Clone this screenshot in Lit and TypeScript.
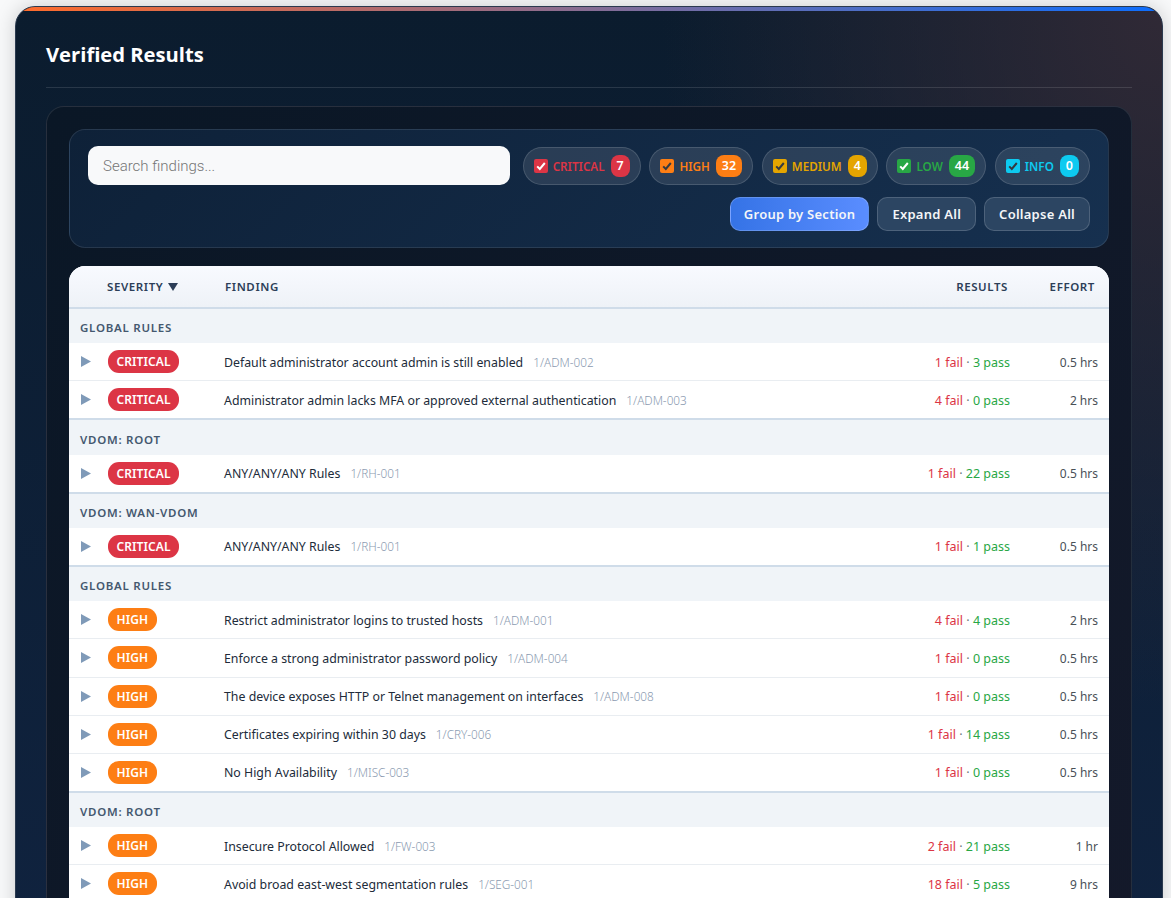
import { LitElement, html, css } from "lit";
import { customElement } from "lit/decorators.js";

type Row = { sev: string; title: string; id: string; fail: number; pass: number; effort: string };
type Group = { name: string; rows: Row[] };

const crit = "CRITICAL";
const high = "HIGH";

const groups: Group[] = [
  {
    name: "GLOBAL RULES",
    rows: [
      { sev: crit, title: "Default administrator account admin is still enabled", id: "1/ADM-002", fail: 1, pass: 3, effort: "0.5 hrs" },
      { sev: crit, title: "Administrator admin lacks MFA or approved external authentication", id: "1/ADM-003", fail: 4, pass: 0, effort: "2 hrs" },
    ],
  },
  { name: "VDOM: ROOT", rows: [{ sev: crit, title: "ANY/ANY/ANY Rules", id: "1/RH-001", fail: 1, pass: 22, effort: "0.5 hrs" }] },
  { name: "VDOM: WAN-VDOM", rows: [{ sev: crit, title: "ANY/ANY/ANY Rules", id: "1/RH-001", fail: 1, pass: 1, effort: "0.5 hrs" }] },
  {
    name: "GLOBAL RULES",
    rows: [
      { sev: high, title: "Restrict administrator logins to trusted hosts", id: "1/ADM-001", fail: 4, pass: 4, effort: "2 hrs" },
      { sev: high, title: "Enforce a strong administrator password policy", id: "1/ADM-004", fail: 1, pass: 0, effort: "0.5 hrs" },
      { sev: high, title: "The device exposes HTTP or Telnet management on interfaces", id: "1/ADM-008", fail: 1, pass: 0, effort: "0.5 hrs" },
      { sev: high, title: "Certificates expiring within 30 days", id: "1/CRY-006", fail: 1, pass: 14, effort: "0.5 hrs" },
      { sev: high, title: "No High Availability", id: "1/MISC-003", fail: 1, pass: 0, effort: "0.5 hrs" },
    ],
  },
  {
    name: "VDOM: ROOT",
    rows: [
      { sev: high, title: "Insecure Protocol Allowed", id: "1/FW-003", fail: 2, pass: 21, effort: "1 hr" },
      { sev: high, title: "Avoid broad east-west segmentation rules", id: "1/SEG-001", fail: 18, pass: 5, effort: "9 hrs" },
    ],
  },
];

const filters = [
  { label: "CRITICAL", count: 7, cls: "critical" },
  { label: "HIGH", count: 32, cls: "high" },
  { label: "MEDIUM", count: 4, cls: "medium" },
  { label: "LOW", count: 44, cls: "low" },
  { label: "INFO", count: 0, cls: "info" },
];

@customElement("app-root")
export class AppRoot extends LitElement {
  static styles = css`
    :host {
      display: block;
      height: 898px;
      overflow: hidden;
      background: #f8f9fa;
      font-family: "Noto Sans", "Open Sans", sans-serif;
      box-sizing: border-box;
      padding: 6px 8px 0 15px;
    }
    * { box-sizing: border-box; }
    .card {
      position: relative;
      border: 1px solid #2b3a4f;
      border-radius: 20px;
      background:
        radial-gradient(500px 700px at 100% 0%, rgba(50, 42, 54, 0.95), rgba(50, 42, 54, 0) 100%),
        linear-gradient(180deg, #0b1c2e, #102340);
      padding: 30px 30px 0;
      height: 1000px;
      box-shadow: 0 0 20px rgba(0, 0, 0, 0.18);
      overflow: hidden;
    }
    .accent {
      position: absolute;
      top: 0; left: 0; right: 0;
      height: 4px;
      background: linear-gradient(90deg, #ff6b2b, #0d6efd);
    }
    h2 {
      margin: 0;
      color: #fff;
      font-family: "Open Sans", "Noto Sans", sans-serif;
      font-size: 20.2px;
      font-weight: 700;
      line-height: 34px;
      height: 51px;
      border-bottom: 1px solid rgba(255, 255, 255, 0.12);
    }
    .panel {
      margin-top: 18px;
      border: 1px solid rgba(255, 255, 255, 0.1);
      border-radius: 18px;
      padding: 22px;
      background: linear-gradient(135deg, #0a1726, #14192a);
      height: 900px;
    }
    .toolbar {
      border: 1px solid rgba(255, 255, 255, 0.1);
      border-radius: 16px;
      background: linear-gradient(135deg, #0e2138, #16304f);
      padding: 16px 18px;
      height: 119px;
    }
    .top { display: flex; align-items: center; gap: 8px; justify-content: space-between; }
    .search {
      flex: 0 0 422px;
      height: 39px;
      border-radius: 10px;
      background: #f8f9fa;
      color: #757575;
      font-family: Roboto, sans-serif;
      font-size: 15px;
      font-weight: 300;
      padding: 0 15px;
      display: flex;
      align-items: center;
      margin-right: 4px;
    }
    .chip {
      height: 38px;
      display: flex;
      align-items: center;
      gap: 5px;
      padding: 0 10px;
      border-radius: 19px;
      background: rgba(255, 255, 255, 0.1);
      border: 1px solid rgba(255, 255, 255, 0.14);
      font-size: 11.7px;
      font-weight: 600;
    }
    .box {
      width: 14px; height: 14px; border-radius: 2px;
      display: flex; align-items: center; justify-content: center;
    }
    .count {
      height: 22px;
      min-width: 19px;
      padding: 0 6px;
      border-radius: 8px;
      font-size: 12.5px;
      font-weight: 600;
      color: #fff;
      display: flex;
      align-items: center;
      justify-content: center;
      margin-left: 1px;
    }
    .critical { color: #dc3545; }
    .high { color: #fd7e14; }
    .medium { color: #e5a500; }
    .low { color: #28a745; }
    .info { color: #0dcaf0; }
    .critical .box, .critical .count { background: #dc3545; }
    .high .box, .high .count { background: #fd7e14; }
    .medium .box, .medium .count { background: #e5a500; }
    .low .box, .low .count { background: #28a745; }
    .info .box, .info .count { background: #0dcaf0; }
    .actions { display: flex; justify-content: flex-end; gap: 8px; margin-top: 12px; }
    button {
      height: 34px;
      border-radius: 10px;
      border: 1px solid rgba(255, 255, 255, 0.16);
      background: #2c4562;
      color: #f4f6f8;
      font-family: inherit;
      font-size: 13px;
      font-weight: 600;
      letter-spacing: 0.25px;
      padding: 0 14px;
    }
    button.primary {
      background: linear-gradient(90deg, #3573e6, #5a8dff);
      border-color: rgba(255, 255, 255, 0.2);
      padding: 0 13px;
    }
    .tablewrap {
      margin-top: 18px;
      border-radius: 16px 16px 0 0;
      overflow: hidden;
      background: #fff;
    }
    .rowgrid {
      display: grid;
      grid-template-columns: 39px 116px 1fr 120px 88px;
      align-items: center;
    }
    .head {
      height: 43px;
      background: linear-gradient(180deg, #f8faff, #eef2f7);
      border-bottom: 2px solid #cfdce9;
      color: #2c3e58;
      font-size: 11.5px;
      font-weight: 600;
      letter-spacing: 0.6px;
    }
    .head .r1 { text-align: right; padding-right: 13px; }
    .head .r2 { text-align: right; padding-right: 14px; }
    .head .sev { display: flex; align-items: center; gap: 5px; margin-left: -1px; }
    .head .find { margin-left: 1px; }
    .section {
      height: 34.1px;
      background: #f0f4f8;
      color: #44586f;
      font-size: 11.5px;
      font-weight: 600;
      letter-spacing: 0.75px;
      padding: 3px 0 0 11px;
      display: flex;
      align-items: center;
    }
    .row {
      height: 38.2px;
      border-bottom: 1px solid #e9edf1;
      color: #212b3a;
      font-size: 12.33px;
    }
    .row.last { height: 39.2px; border-bottom: 2px solid #cfdce9; }
    .tri { padding-left: 12px; display: flex; }
    .badge {
      display: inline-flex;
      align-items: center;
      height: 23px;
      padding: 0 8.5px;
      border-radius: 11px;
      color: #fff;
      font-size: 12px;
      font-weight: 600;
      letter-spacing: 0.1px;
    }
    .badge.CRITICAL { background: #dc3545; }
    .badge.HIGH { background: #fd7e14; }
    .title, .res, .eff { padding-top: 1px; }
    .fid { color: #8a9ab0; font-size: 11.75px; margin-left: 10px; font-weight: 300; }
    .res { text-align: right; padding-right: 11px; font-size: 12.5px; }
    .fail { color: #dc3545; }
    .pass { color: #28a745; }
    .sep { color: #6c757d; }
    .eff { text-align: right; padding-right: 11px; color: #495057; font-size: 12px; }
  `;

  private check(dark: boolean) {
    return html`<svg width="10" height="10" viewBox="0 0 10 10"><path d="M1.2 5.4 L3.8 8 L8.8 2" fill="none" stroke=${dark ? "#343a40" : "#fff"} stroke-width="2"></path></svg>`;
  }

  private renderRow(r: Row, last: boolean) {
    return html`<div class="rowgrid row ${last ? "last" : ""}">
      <div class="tri"><svg width="10" height="11" viewBox="0 0 10 11"><path d="M0 0 L10 5.5 L0 11 Z" fill="#7f9ab8"></path></svg></div>
      <div><span class="badge ${r.sev}">${r.sev}</span></div>
      <div class="title">${r.title}<span class="fid">${r.id}</span></div>
      <div class="res"><span class="fail">${r.fail} fail</span> <span class="sep">·</span> <span class="pass">${r.pass} pass</span></div>
      <div class="eff">${r.effort}</div>
    </div>`;
  }

  render() {
    return html`<div class="card">
      <div class="accent"></div>
      <h2>Verified Results</h2>
      <div class="panel">
        <div class="toolbar">
          <div class="top">
            <div class="search">Search findings...</div>
            ${filters.map(
              (f) => html`<div class="chip ${f.cls}">
                <span class="box">${this.check(f.cls === "high" || f.cls === "medium" || f.cls === "info")}</span>
                <span>${f.label}</span>
                <span class="count">${f.count}</span>
              </div>`,
            )}
          </div>
          <div class="actions">
            <button class="primary">Group by Section</button>
            <button>Expand All</button>
            <button>Collapse All</button>
          </div>
        </div>
        <div class="tablewrap">
          <div class="rowgrid head">
            <div></div>
            <div class="sev">SEVERITY <svg width="10" height="8" viewBox="0 0 10 8"><path d="M0 0 H10 L5 8 Z" fill="#2c3e58"></path></svg></div>
            <div class="find">FINDING</div>
            <div class="r1">RESULTS</div>
            <div class="r2">EFFORT</div>
          </div>
          ${groups.map(
            (g) => html`<div class="section">${g.name}</div>
              ${g.rows.map((r, i) => this.renderRow(r, i === g.rows.length - 1))}`,
          )}
        </div>
      </div>
    </div>`;
  }
}
